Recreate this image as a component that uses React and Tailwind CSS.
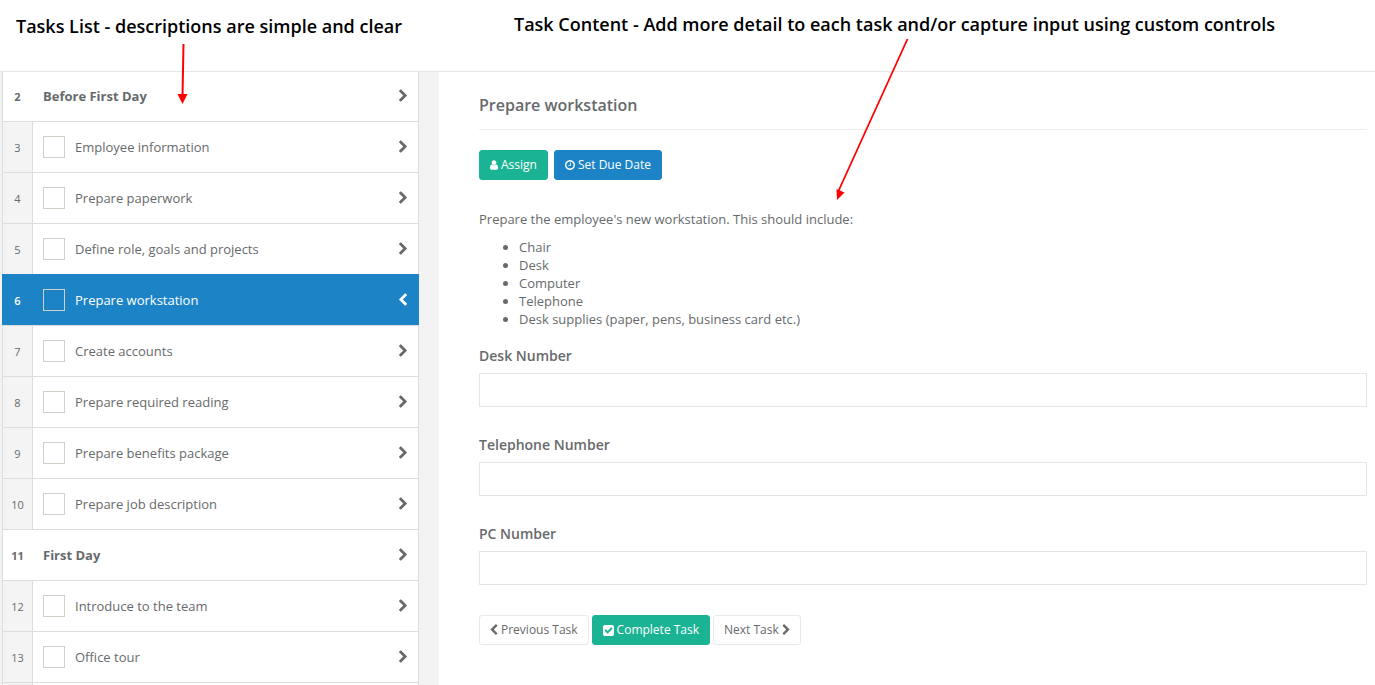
import React from 'react';
import clsx from 'clsx';

const tasks = [
  { no: 2, title: 'Before First Day', heading: true },
  { no: 3, title: 'Employee information' },
  { no: 4, title: 'Prepare paperwork' },
  { no: 5, title: 'Define role, goals and projects' },
  { no: 6, title: 'Prepare workstation', active: true },
  { no: 7, title: 'Create accounts' },
  { no: 8, title: 'Prepare required reading' },
  { no: 9, title: 'Prepare benefits package' },
  { no: 10, title: 'Prepare job description' },
  { no: 11, title: 'First Day', heading: true },
  { no: 12, title: 'Introduce to the team' },
  { no: 13, title: 'Office tour' },
];

const supplies = [
  'Chair',
  'Desk',
  'Computer',
  'Telephone',
  'Desk supplies (paper, pens, business card etc.)',
];

const fields = [
  { id: 'desk', label: 'Desk Number' },
  { id: 'telephone', label: 'Telephone Number' },
  { id: 'pc', label: 'PC Number' },
];

const ChevronRight = ({ className }) => (
  <svg viewBox="346 0 1036 1792" fill="currentColor" aria-hidden="true" className={className}>
    <path d="M1363 877l-742 742q-19 19-45 19t-45-19l-166-166q-19-19-19-45t19-45l531-531-531-531q-19-19-19-45t19-45l166-166q19-19 45-19t45 19l742 742q19 19 19 45t-19 45z" />
  </svg>
);

const ChevronLeft = ({ className }) => (
  <svg viewBox="410 0 1036 1792" fill="currentColor" aria-hidden="true" className={className}>
    <path d="M1427 301l-531 531 531 531q19 19 19 45t-19 45l-166 166q-19 19-45 19t-45-19l-742-742q-19-19-19-45t19-45l742-742q19-19 45-19t45 19l166 166q19 19 19 45t-19 45z" />
  </svg>
);

const UserIcon = () => (
  <svg viewBox="256 0 1280 1792" fill="currentColor" aria-hidden="true" className="h-3 w-2">
    <path d="M1536 1399q0 109-62.5 187t-150.5 78h-854q-88 0-150.5-78t-62.5-187q0-85 8.5-160.5t31.5-152 58.5-131 94-89 134.5-34.5q131 128 313 128t313-128q76 0 134.5 34.5t94 89 58.5 131 31.5 152 8.5 160.5zm-256-887q0 159-112.5 271.5t-271.5 112.5-271.5-112.5-112.5-271.5 112.5-271.5 271.5-112.5 271.5 112.5 112.5 271.5z" />
  </svg>
);

const ClockIcon = () => (
  <svg viewBox="128 128 1536 1536" fill="currentColor" aria-hidden="true" className="size-2.5">
    <path d="M1024 544v448q0 14-9 23t-23 9h-320q-14 0-23-9t-9-23v-64q0-14 9-23t23-9h224v-352q0-14 9-23t23-9h64q14 0 23 9t9 23zm416 352q0-148-73-273t-198-198-273-73-273 73-198 198-73 273 73 273 198 198 273 73 273-73 198-198 73-273zm224 0q0 209-103 385.5t-279.5 279.5-385.5 103-385.5-103-279.5-279.5-103-385.5 103-385.5 279.5-279.5 385.5-103 385.5 103 279.5 279.5 103 385.5z" />
  </svg>
);

const CheckSquareIcon = () => (
  <svg viewBox="128 128 1536 1536" fill="currentColor" aria-hidden="true" className="size-[11px]">
    <path d="M813 1299l614-614q19-19 19-45t-19-45l-102-102q-19-19-45-19t-45 19l-467 467-211-211q-19-19-45-19t-45 19l-102 102q-19 19-19 45t19 45l358 358q19 19 45 19t45-19zm851-883v960q0 119-84.5 203.5t-203.5 84.5h-960q-119 0-203.5-84.5t-84.5-203.5v-960q0-119 84.5-203.5t203.5-84.5h960q119 0 203.5 84.5t84.5 203.5z" />
  </svg>
);

const TaskRow = ({ no, title, heading, active }) => (
  <li
    className={clsx(
      'flex h-[51px] border-x border-t first:h-[49px] first:border-t-0 first:pb-0.5',
      active ? 'border-[#1c84c6] bg-[#1c84c6] font-semibold text-white' : 'border-[#dddddd] bg-white',
      heading && 'font-bold'
    )}
  >
    <span
      className={clsx(
        'flex w-[30px] shrink-0 items-center justify-center border-r pt-0.5 text-[11px]',
        heading && 'border-transparent',
        active && 'border-transparent',
        !heading && !active && 'border-[#dddddd] bg-[#f4f4f4]'
      )}
    >
      {no}
    </span>
    <div className="flex grow items-center gap-2.5 pr-[11px] pl-2.5">
      {!heading && (
        <input
          id={`task-${no}`}
          type="checkbox"
          className="size-[22px] appearance-none border border-[#d2cec8]"
        />
      )}
      {heading ? (
        <span>{title}</span>
      ) : (
        <label htmlFor={`task-${no}`} className={clsx(active && 'font-medium')}>
          {title}
        </label>
      )}
      {active ? (
        <ChevronLeft className="ml-auto h-3.5 w-2" />
      ) : (
        <ChevronRight className="ml-auto h-3.5 w-2" />
      )}
    </div>
  </li>
);

const Button = ({ variant, children }) => (
  <button
    type="button"
    className={clsx(
      'flex h-[30px] items-center gap-[3px] rounded-[3px] border px-2.5 text-xs',
      variant === 'primary' && 'border-[#1ab394] bg-[#1ab394] font-medium text-white',
      variant === 'success' && 'border-[#1c84c6] bg-[#1c84c6] font-medium text-white',
      variant === 'white' && 'border-[#e7eaec] bg-white'
    )}
  >
    {children}
  </button>
);

// Red callout arrows that point from the captions into the two panels
const Arrows = () => (
  <svg
    width="920"
    height="210"
    aria-hidden="true"
    className="pointer-events-none absolute top-0 left-0"
    fill="#ff0000"
    stroke="#ff0000"
  >
    <line x1="183.5" y1="44" x2="182.5" y2="96" strokeWidth="2" />
    <path d="M177.5 94h10l-5 10z" stroke="none" />
    <line x1="907.5" y1="39" x2="838" y2="192" strokeWidth="1.8" />
    <path d="M833.5 189l8 3.5-7.5 7.5z" stroke="none" transform="translate(3 0)" />
  </svg>
);

export default function App() {
  return (
    <div className="relative flex h-screen flex-col overflow-hidden bg-white font-['Open_Sans',sans-serif] text-[13px] leading-[18px] text-[#676a6c]">
      <header className="flex h-[71px] shrink-0 text-lg font-semibold text-black">
        <h1 className="w-[439px] shrink-0 pt-3 pl-4">Tasks List - descriptions are simple and clear</h1>
        <h1 className="pt-2.5 pl-[75px] whitespace-nowrap">
          Task Content - Add more detail to each task and/or capture input using custom controls
        </h1>
      </header>

      <main className="flex min-h-0 grow border-t border-[#e7e7e7]">
        {/* Task list */}
        <aside className="w-[439px] shrink-0 bg-[#f3f3f4] pr-5 pl-0.5">
          <ul>
            {tasks.map((task) => (
              <TaskRow key={task.no} {...task} />
            ))}
            <li className="flex h-[51px] border-x border-t border-[#dddddd] bg-white">
              <span className="w-[30px] border-r border-[#dddddd] bg-[#f4f4f4]" />
            </li>
          </ul>
        </aside>

        {/* Task content */}
        <section className="grow pt-6 pr-2 pl-10">
          <h2 className="border-b border-[#eeeeee] pb-[15px] text-base leading-[18px] font-semibold">
            Prepare workstation
          </h2>

          <div className="mt-5 flex gap-1.5">
            <Button variant="primary">
              <UserIcon />
              Assign
            </Button>
            <Button variant="success">
              <ClockIcon />
              Set Due Date
            </Button>
          </div>

          <p className="mt-[30px]">Prepare the employee's new workstation. This should include:</p>
          <ul className="mt-2.5 list-disc pl-10">
            {supplies.map((item) => (
              <li key={item}>{item}</li>
            ))}
          </ul>

          <form className="mt-[19px] flex flex-col gap-[29px]">
            {fields.map(({ id, label }) => (
              <div key={id}>
                <label htmlFor={id} className="block pb-2 text-sm leading-[18px] font-semibold">
                  {label}
                </label>
                <input
                  id={id}
                  type="text"
                  className="block h-[34px] w-full border border-[#e5e6e7] bg-white px-3 outline-none"
                />
              </div>
            ))}
          </form>

          <div className="mt-[30px] flex gap-[3px]">
            <Button variant="white">
              <ChevronLeft className="h-3 w-2" />
              Previous Task
            </Button>
            <Button variant="primary">
              <CheckSquareIcon />
              Complete Task
            </Button>
            <Button variant="white">
              Next Task
              <ChevronRight className="h-3 w-2" />
            </Button>
          </div>
        </section>
      </main>

      <Arrows />
    </div>
  );
}
